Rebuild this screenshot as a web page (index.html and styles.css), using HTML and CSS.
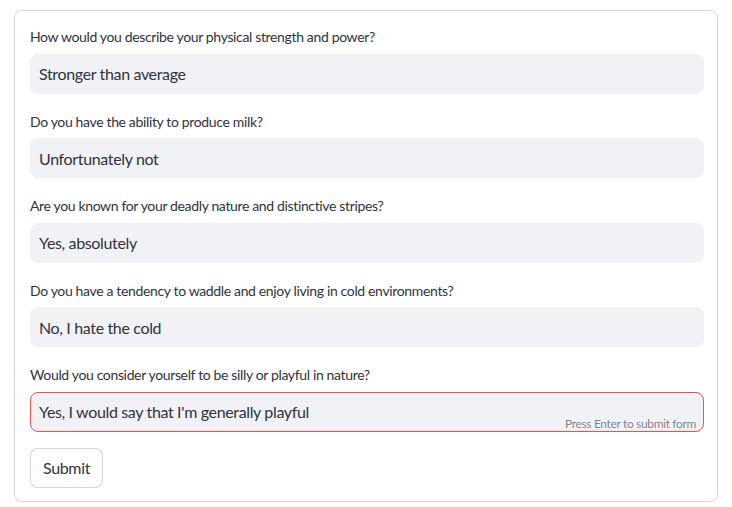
FILE: index.html
```html
<!DOCTYPE html>
<html>
<head>
<meta charset="utf-8">
<link rel="stylesheet" href="styles.css">
</head>
<body>
<form class="form">
  <div class="field">
    <label class="label">How would you describe your physical strength and power?</label>
    <div class="input"><span class="value">Stronger than average</span></div>
  </div>
  <div class="field">
    <label class="label">Do you have the ability to produce milk?</label>
    <div class="input"><span class="value">Unfortunately not</span></div>
  </div>
  <div class="field">
    <label class="label">Are you known for your deadly nature and distinctive stripes?</label>
    <div class="input"><span class="value">Yes, absolutely</span></div>
  </div>
  <div class="field">
    <label class="label">Do you have a tendency to waddle and enjoy living in cold environments?</label>
    <div class="input"><span class="value">No, I hate the cold</span></div>
  </div>
  <div class="field">
    <label class="label">Would you consider yourself to be silly or playful in nature?</label>
    <div class="input focused"><span class="value">Yes, I would say that I'm generally playful</span><span class="hint">Press Enter to submit form</span></div>
  </div>
  <div class="actions">
    <button type="button" class="button">Submit</button>
  </div>
</form>
</body>
</html>
```
FILE: styles.css
```css
html, body {
  margin: 0;
  padding: 0;
  background: #ffffff;
}
body {
  padding: 10px 14px 0 14px;
  font-family: "Source Sans Pro", "Lato", "Noto Sans", sans-serif;
  color: rgb(49, 51, 63);
  letter-spacing: -0.022em;
}
.form {
  width: 704px;
  box-sizing: border-box;
  border: 1px solid rgba(49, 51, 63, 0.2);
  border-radius: 8px;
  padding: 14px 13px 13px 15px;
  display: flex;
  flex-direction: column;
  gap: 16px;
}
.field {
  display: flex;
  flex-direction: column;
}
.label {
  font-size: 14px;
  min-height: 24px;
  line-height: 24px;
  margin-bottom: 4.5px;
  display: flex;
  align-items: center;
}
.input {
  position: relative;
  height: 40px;
  box-sizing: border-box;
  background: #f0f2f6;
  border: 1px solid #f0f2f6;
  border-radius: 8px;
  display: flex;
  align-items: center;
  padding: 0 8px;
  font-size: 16px;
}
.input.focused {
  border-color: #ff4b4b;
}
.hint {
  position: absolute;
  right: 7px;
  bottom: 0px;
  font-size: 12px;
  color: rgba(49, 51, 63, 0.6);
}
.actions {
  display: flex;
}
.button {
  font-family: inherit;
  font-size: 16px;
  letter-spacing: inherit;
  color: rgb(49, 51, 63);
  background: #ffffff;
  border: 1px solid rgba(49, 51, 63, 0.2);
  border-radius: 8px;
  height: 40px;
  padding: 0 12px;
  margin: 0;
}
```
